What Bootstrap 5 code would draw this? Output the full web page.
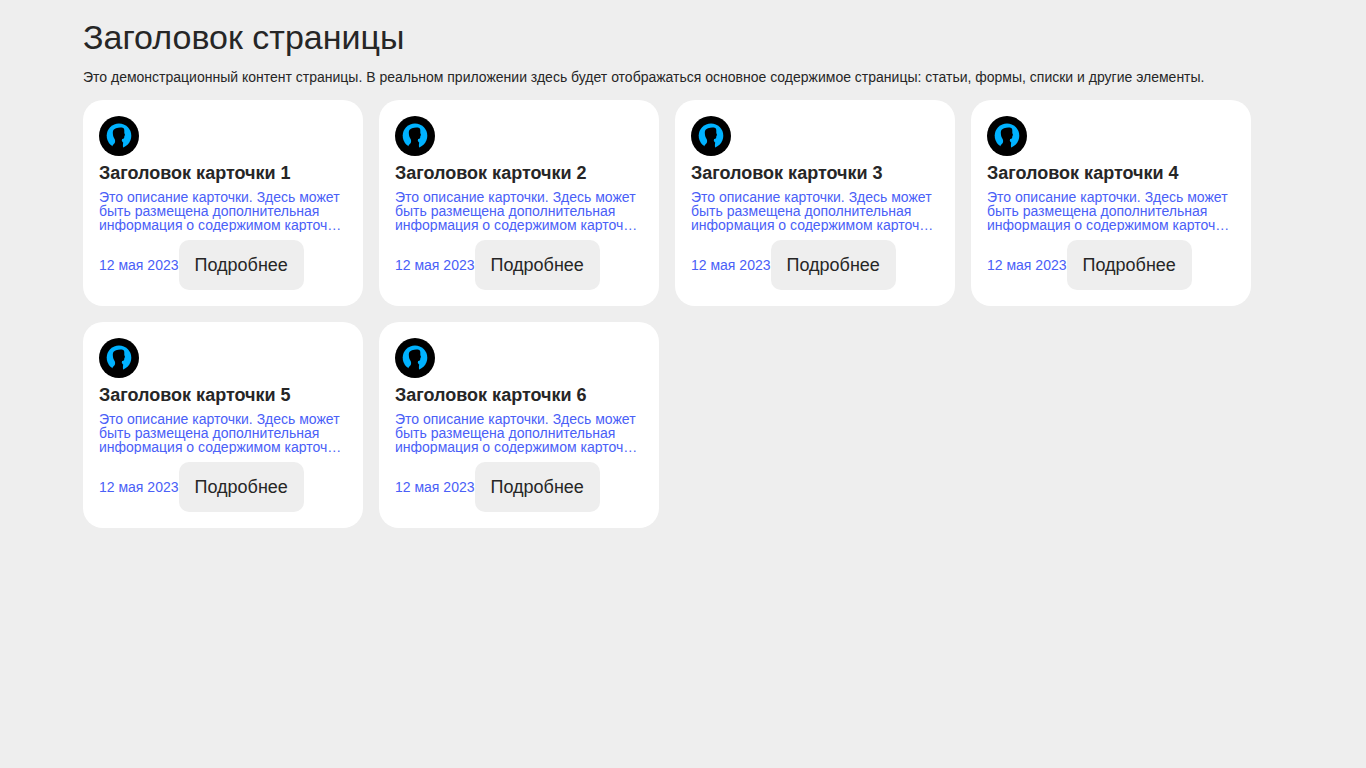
<!DOCTYPE html>
<html lang="ru">
<head>
<meta charset="utf-8">
<meta name="viewport" content="width=device-width, initial-scale=1">
<title>Заголовок страницы</title>
<link rel="stylesheet" href="https://cdn.jsdelivr.net/npm/bootstrap@5.3.0/dist/css/bootstrap.min.css">
<style>
body{background:#eee;color:#262626;font-family:"Liberation Sans",Arial,sans-serif;font-size:14px;line-height:1}
.page{width:1200px;padding-top:20px}
.page-title{font-size:34px;line-height:34px;font-weight:400}
.page-lead{line-height:14px}
.tile{width:280px;height:206px;border-radius:20px;border:0;color:#262626}
.tile-title{font-size:18px;line-height:18px;font-weight:700;color:#262626}
.tile-text{color:#4a60f7;line-height:14px;height:42px;display:-webkit-box;-webkit-line-clamp:3;-webkit-box-orient:vertical;overflow:hidden}
.tile-date{color:#4a60f7}
.btn-more{--bs-btn-color:#262626;--bs-btn-bg:#eee;--bs-btn-hover-bg:#e2e2e2;height:50px;border:0;border-radius:10px;font-size:18px;line-height:18px;padding:0 16px}
.avatar-ring{filter:blur(.5px)}
</style>
</head>
<body>
<svg width="0" height="0" class="position-absolute" aria-hidden="true">
<symbol id="avatar" viewBox="0 0 40 40">
<circle cx="20" cy="20" r="20" fill="#000"/>
<g class="avatar-ring">
<circle cx="20" cy="19.800" r="12.300" fill="#00b2ff"/>
<path fill="#000" d="M13.800 16.500c0-2 1.200-3.500 3.200-4.200 2.500-1 5.500-1 7.200-.4 1 .5 1.200 1.800 1.100 3.200v2l.8 2.100-.8.600c.2 1.900-.2 3.300-2.200 3.200l-.3 1.700c.3.900.9 1.300 1.400 1.700l-.3 2.500.3 6h-12.200l1.700-5.700c1.400-1.200 2.200-2 2.400-3.700.1-1.300-.1-2-.8-3-1-1.500-1.500-3.500-1.500-6z"/>
</g>
</symbol>
</svg>
<main class="page mx-auto">
<h1 class="page-title mb-3">Заголовок страницы</h1>
<p class="page-lead mb-3">Это демонстрационный контент страницы. В реальном приложении здесь будет отображаться основное содержимое страницы: статьи, формы, списки и другие элементы.</p>
<div class="d-flex flex-wrap gap-3" id="tiles"></div>
</main>
<template id="tile">
<article class="card tile p-3">
<svg class="mb-2" width="40" height="40" role="img" aria-label="Аватар"><use href="#avatar"/></svg>
<h2 class="tile-title mb-2"></h2>
<p class="tile-text mb-2">Это описание карточки. Здесь может быть размещена дополнительная информация о содержимом карточки и другие сведения.</p>
<div class="d-flex align-items-center"><span class="tile-date text-nowrap">12 мая 2023</span><button type="button" class="btn btn-more">Подробнее</button></div>
</article>
</template>
<script src="https://cdn.jsdelivr.net/npm/bootstrap@5.3.0/dist/js/bootstrap.bundle.min.js"></script>
<script>
const tpl=document.getElementById('tile'),box=document.getElementById('tiles');
for(let i=1;i<=6;i++){
  const n=tpl.content.cloneNode(true);
  n.querySelector('h2').textContent='Заголовок карточки '+i;
  box.append(n);
}
</script>
</body>
</html>
